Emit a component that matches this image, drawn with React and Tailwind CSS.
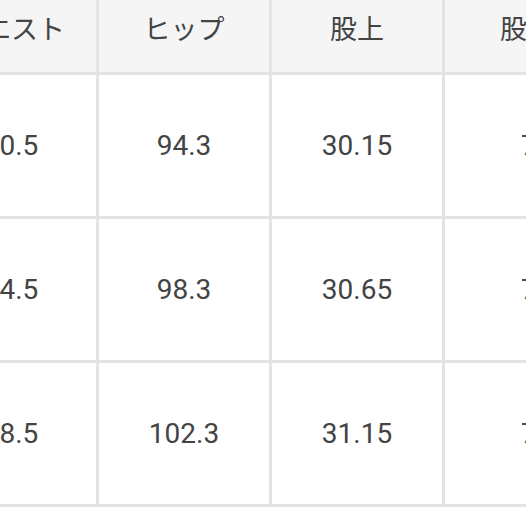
import React from 'react';

const headers = ['ウエスト', 'ヒップ', '股上', '股下'];

const rows = [
  ['70.5', '94.3', '30.15', '76'],
  ['74.5', '98.3', '30.65', '77'],
  ['78.5', '102.3', '31.15', '78'],
];

const font = { fontFamily: 'Roboto, "Noto Sans CJK JP", sans-serif' };

export default function App() {
  return (
    <div className="w-[526px] h-[526px] overflow-hidden bg-white text-[#444444]" style={font}>
      <div className="ml-[-74px] grid grid-cols-[170px_170px_170px_170px] gap-[3px] bg-[#e3e3e3] pb-[3px] w-max">
        {headers.map((h, i) => (
          <div
            key={h}
            className={
              'h-[72px] bg-[#f5f5f5] flex items-center pb-[12px] text-[27px] whitespace-nowrap ' +
              (i === 3 ? 'justify-start pl-[55px]' : 'justify-center')
            }
          >
            {h}
          </div>
        ))}
        {rows.map((r, ri) =>
          r.map((v, i) => (
            <div
              key={ri + '-' + i}
              className={
                'h-[141px] bg-white flex items-center text-[28px] whitespace-nowrap ' +
                (i === 3 ? 'justify-start pl-[76px]' : 'justify-center')
              }
            >
              {v}
            </div>
          ))
        )}
      </div>
    </div>
  );
}
